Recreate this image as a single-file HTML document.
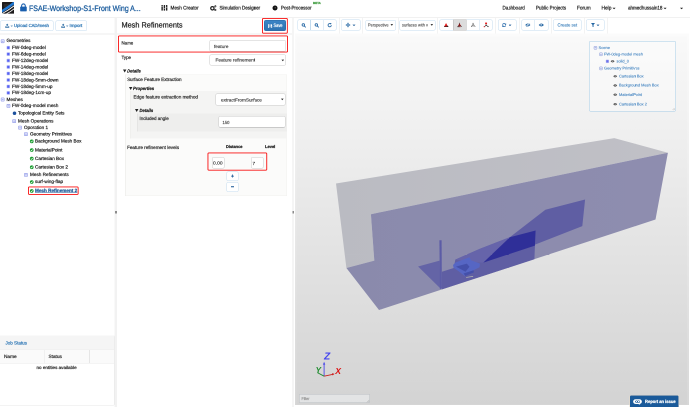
<!DOCTYPE html>
<html><head><meta charset="utf-8"><title>SimScale Mesh Refinements</title>
<style>
html,body{margin:0;padding:0;background:#fff;}
body{width:690px;height:407px;overflow:hidden;font-family:"Liberation Sans",sans-serif;}
#outer{position:absolute;left:0;top:0;width:1380px;height:814px;transform:scale(0.5);transform-origin:0 0;will-change:transform;overflow:hidden;background:#fff;}
#root{position:absolute;left:0;top:0;width:690px;height:407px;overflow:hidden;background:#fff;zoom:2;}
#root div, #root svg, #root span{position:absolute;box-sizing:border-box;}
.t{text-rendering:geometricPrecision;-webkit-text-stroke:0.17px currentColor;white-space:nowrap;line-height:1;transform-origin:0 50%;font-family:"Liberation Sans",sans-serif;}
.btn{border:0.6px solid #c3dbee;border-radius:1.6px;background:#fff;}
.inp{border:0.6px solid #c9c9c9;border-radius:1.6px;background:#fff;}
.red{border:0.75px solid #f21a1a;border-radius:0.6px;}
.sep{width:0.5px;background:#e6e6e6;top:17.8px;height:15.6px;}

</style></head>
<body>
<div id="outer"><div id="root">
<!-- ================= NAVBAR ================= -->
<div style="left:0;top:0;width:690px;height:17.6px;background:#fff;border-bottom:0.7px solid #e2e2e2"></div>
<svg style="left:2px;top:2px" width="12.2" height="11.8" viewBox="0 0 100 100" preserveAspectRatio="none">
  <defs><clipPath id="lgc"><rect x="0" y="0" width="100" height="100" rx="5"/></clipPath></defs>
  <g clip-path="url(#lgc)">
  <rect x="0" y="0" width="100" height="100" fill="#1d1b1c"/>
  <rect x="17" y="17" width="40" height="30" fill="#2b292a"/>
  <path d="M-4 80 Q 48 50 104 3" stroke="#1f78d4" stroke-width="21" fill="none"/>
  <path d="M-4 101 Q 54 70 104 29" stroke="#fff" stroke-width="7" fill="none"/>
  <path d="M20 108 Q 66 88 104 53" stroke="#fff" stroke-width="6" fill="none"/>
  </g>
</svg>
<svg style="left:20px;top:3px" width="6.9" height="8.6" viewBox="0 0 22 27">
  <path d="M5.2 13 V8.6 a5.8 5.8 0 0 1 11.6 0 V13" fill="none" stroke="#1a5fae" stroke-width="3.4"/>
  <rect x="0.5" y="11.4" width="21" height="15.2" rx="2" fill="#1a5fae"/>
</svg>
<!-- mesh creator icon -->
<svg style="left:161px;top:5.2px" width="6.8" height="5.6" viewBox="0 0 19 16">
  <g fill="#222"><rect x="1" y="0" width="4" height="16" rx="1"/><rect x="7.5" y="0" width="4" height="16" rx="1"/><rect x="14" y="0" width="4" height="16" rx="1"/></g>
  <g fill="#fff"><rect x="1" y="4" width="4" height="1.3"/><rect x="7.5" y="9" width="4" height="1.3"/><rect x="14" y="5.5" width="4" height="1.3"/></g>
</svg>
<!-- simulation designer icon (cogs) -->
<svg style="left:210.2px;top:4.8px" width="6.6" height="6.2" viewBox="0 0 18 17">
  <circle cx="6.5" cy="9" r="4.6" fill="none" stroke="#222" stroke-width="3.4"/>
  <circle cx="14.6" cy="3.6" r="1.9" fill="none" stroke="#222" stroke-width="1.8"/>
  <circle cx="14.6" cy="13.6" r="1.9" fill="none" stroke="#222" stroke-width="1.8"/>
</svg>
<!-- post-processor icon -->
<div style="left:272.6px;top:5.3px;width:5px;height:5px;border-radius:50%;background:#111"></div>
<div style="left:274.3px;top:7px;width:1.6px;height:1.6px;border-radius:50%;background:#555"></div>
<!-- carets -->
<svg style="left:612.4px;top:7.5px" width="3.2" height="2" viewBox="0 0 8 4"><path d="M0 0H8L4 4Z" fill="#222"/></svg>
<svg style="left:663.4px;top:7.5px" width="3.2" height="2" viewBox="0 0 8 4"><path d="M0 0H8L4 4Z" fill="#222"/></svg>
<svg style="left:680.0px;top:7.5px" width="3.2" height="2" viewBox="0 0 8 4"><path d="M0 0H8L4 4Z" fill="#222"/></svg>

<!-- ================= PANEL SEPARATORS ================= -->
<div style="left:114.4px;top:17.8px;width:2.6px;height:389.2px;background:#f2f2f2"></div>
<div style="left:292px;top:17.8px;width:1.9px;height:389.2px;background:#f5f5f5"></div>
<div style="left:114.9px;top:210.9px;width:1.9px;height:2.7px;background:#8c8c8c"></div>
<div style="left:292.6px;top:211px;width:1.5px;height:2.6px;background:#8c8c8c"></div>
<!-- line under toolbars -->
<div style="left:0;top:33.7px;width:114.4px;height:0.6px;background:#ececec"></div>
<div style="left:117px;top:33.7px;width:175px;height:0.6px;background:#ececec"></div>

<!-- ================= LEFT TOOLBAR ================= -->
<div class="btn" style="left:0.2px;top:20.5px;width:53.4px;height:10.5px"></div>
<div class="btn" style="left:55.3px;top:20.5px;width:31.7px;height:10.5px"></div>
<svg style="left:5.2px;top:23.7px" width="4.4" height="4.4" viewBox="0 0 12 12"><path d="M6 0.5 L9.5 4.5 H7.3 V7.5 H4.7 V4.5 H2.5 Z M0.5 8 H3.6 L4.4 9.2 H7.6 L8.4 8 H11.5 V11.5 H0.5 Z" fill="#2e6da4"/></svg>
<svg style="left:10.6px;top:25.3px" width="2.4" height="1.4" viewBox="0 0 8 4"><path d="M0 0H8L4 4Z" fill="#2e6da4"/></svg>
<svg style="left:60.8px;top:23.7px" width="4.4" height="4.4" viewBox="0 0 12 12"><path d="M6 0.5 L9.5 4.5 H7.3 V7.5 H4.7 V4.5 H2.5 Z M0.5 8 H3.6 L4.4 9.2 H7.6 L8.4 8 H11.5 V11.5 H0.5 Z" fill="#2e6da4"/></svg>
<svg style="left:66.2px;top:25.3px" width="2.4" height="1.4" viewBox="0 0 8 4"><path d="M0 0H8L4 4Z" fill="#2e6da4"/></svg>

<!-- ================= TREE ICONS ================= -->
<svg style="left:0;top:0" width="115" height="200" viewBox="0 0 115 200">
  <defs>
    <g><rect x="0" y="0" width="3.1" height="3.2" rx="0.5" fill="#dfe3fb" stroke="#8f97e6" stroke-width="0.55"/><rect x="0.8" y="1.35" width="1.5" height="0.5" fill="#7f88dd"/></g>
    <g><rect x="0" y="0" width="2.8" height="3" rx="0.4" fill="#5560f2" stroke="#b9bff7" stroke-width="0.6"/></g>
    <g><circle cx="1.85" cy="1.85" r="1.85" fill="#169a2c"/><path d="M0.9 1.9 L1.6 2.6 L2.8 1.2" fill="none" stroke="#fff" stroke-width="0.6"/></g>
  </defs>
  <g transform="translate(1.1,39.6)"><rect x="0" y="0" width="3.1" height="3.2" rx="0.5" fill="#dfe3fb" stroke="#8f97e6" stroke-width="0.55"/><rect x="0.8" y="1.35" width="1.5" height="0.5" fill="#7f88dd"/></g>
  <g transform="translate(6.9,46.2)"><rect x="0" y="0" width="2.8" height="3" rx="0.4" fill="#5560f2" stroke="#b9bff7" stroke-width="0.6"/></g>
  <g transform="translate(6.9,52.6)"><rect x="0" y="0" width="2.8" height="3" rx="0.4" fill="#5560f2" stroke="#b9bff7" stroke-width="0.6"/></g>
  <g transform="translate(6.9,59.1)"><rect x="0" y="0" width="2.8" height="3" rx="0.4" fill="#5560f2" stroke="#b9bff7" stroke-width="0.6"/></g>
  <g transform="translate(6.9,65.5)"><rect x="0" y="0" width="2.8" height="3" rx="0.4" fill="#5560f2" stroke="#b9bff7" stroke-width="0.6"/></g>
  <g transform="translate(6.9,72)"><rect x="0" y="0" width="2.8" height="3" rx="0.4" fill="#5560f2" stroke="#b9bff7" stroke-width="0.6"/></g>
  <g transform="translate(6.9,78.5)"><rect x="0" y="0" width="2.8" height="3" rx="0.4" fill="#5560f2" stroke="#b9bff7" stroke-width="0.6"/></g>
  <g transform="translate(6.9,85)"><rect x="0" y="0" width="2.8" height="3" rx="0.4" fill="#5560f2" stroke="#b9bff7" stroke-width="0.6"/></g>
  <g transform="translate(6.9,91.4)"><rect x="0" y="0" width="2.8" height="3" rx="0.4" fill="#5560f2" stroke="#b9bff7" stroke-width="0.6"/></g>
  <g transform="translate(1.1,97.9)"><rect x="0" y="0" width="3.1" height="3.2" rx="0.5" fill="#dfe3fb" stroke="#8f97e6" stroke-width="0.55"/><rect x="0.8" y="1.35" width="1.5" height="0.5" fill="#7f88dd"/></g>
  <g transform="translate(6.9,104.3)"><rect x="0" y="0" width="3.1" height="3.2" rx="0.5" fill="#dfe3fb" stroke="#8f97e6" stroke-width="0.55"/><rect x="0.8" y="1.35" width="1.5" height="0.5" fill="#7f88dd"/></g>
  <circle cx="14.5" cy="113.3" r="1.75" fill="#1b4f9c"/>
  <g transform="translate(12.6,119.5)"><rect x="0" y="0" width="3.1" height="3.2" rx="0.5" fill="#dfe3fb" stroke="#8f97e6" stroke-width="0.55"/><rect x="0.8" y="1.35" width="1.5" height="0.5" fill="#7f88dd"/></g>
  <g transform="translate(18.5,126)"><rect x="0" y="0" width="3.1" height="3.2" rx="0.5" fill="#dfe3fb" stroke="#8f97e6" stroke-width="0.55"/><rect x="0.8" y="1.35" width="1.5" height="0.5" fill="#7f88dd"/></g>
  <g transform="translate(24.4,132.5)"><rect x="0" y="0" width="3.1" height="3.2" rx="0.5" fill="#dfe3fb" stroke="#8f97e6" stroke-width="0.55"/><rect x="0.8" y="1.35" width="1.5" height="0.5" fill="#7f88dd"/></g>
  <g transform="translate(29.9,139.5)"><circle cx="1.85" cy="1.85" r="1.85" fill="#169a2c"/><path d="M0.9 1.9 L1.6 2.6 L2.8 1.2" fill="none" stroke="#fff" stroke-width="0.6"/></g>
  <g transform="translate(29.9,148.2)"><circle cx="1.85" cy="1.85" r="1.85" fill="#169a2c"/><path d="M0.9 1.9 L1.6 2.6 L2.8 1.2" fill="none" stroke="#fff" stroke-width="0.6"/></g>
  <g transform="translate(29.9,156.8)"><circle cx="1.85" cy="1.85" r="1.85" fill="#169a2c"/><path d="M0.9 1.9 L1.6 2.6 L2.8 1.2" fill="none" stroke="#fff" stroke-width="0.6"/></g>
  <g transform="translate(29.9,165.4)"><circle cx="1.85" cy="1.85" r="1.85" fill="#169a2c"/><path d="M0.9 1.9 L1.6 2.6 L2.8 1.2" fill="none" stroke="#fff" stroke-width="0.6"/></g>
  <g transform="translate(24.4,173.3)"><rect x="0" y="0" width="3.1" height="3.2" rx="0.5" fill="#dfe3fb" stroke="#8f97e6" stroke-width="0.55"/><rect x="0.8" y="1.35" width="1.5" height="0.5" fill="#7f88dd"/></g>
  <g transform="translate(29.9,180.2)"><circle cx="1.85" cy="1.85" r="1.85" fill="#169a2c"/><path d="M0.9 1.9 L1.6 2.6 L2.8 1.2" fill="none" stroke="#fff" stroke-width="0.6"/></g>
  <g transform="translate(29.9,189.1)"><circle cx="1.85" cy="1.85" r="1.85" fill="#169a2c"/><path d="M0.9 1.9 L1.6 2.6 L2.8 1.2" fill="none" stroke="#fff" stroke-width="0.6"/></g>
</svg>
<svg style="left:27.20px;top:185.60px" width="52.60" height="10.40" viewBox="27.20 185.60 52.60 10.40"><rect x="28.65" y="187.05" width="49.70" height="7.50" rx="0.9" fill="none" stroke="#f81212" stroke-width="0.9"/></svg>

<!-- ================= JOB STATUS ================= -->
<div style="left:0;top:335.4px;width:114.4px;height:70.2px;background:#fff;border:0.6px solid #e6e6e6;border-left:none;border-radius:0 1.2px 1.2px 0"></div>
<div style="left:0;top:335.6px;width:114.2px;height:13.8px;background:#f5f5f5;border-bottom:0.6px solid #e2e2e2"></div>
<div style="left:0;top:349.8px;width:114.2px;height:13.7px;background:#fafafa;border-bottom:0.6px solid #e8e8e8"></div>
<div style="left:44.3px;top:349.8px;width:0.6px;height:13.7px;background:#e6e6e6"></div>
<div style="left:89.2px;top:349.8px;width:0.6px;height:13.7px;background:#e6e6e6"></div>

<!-- ================= MIDDLE PANEL ================= -->
<svg style="left:261.00px;top:16.80px" width="27.80" height="17.60" viewBox="261.00 16.80 27.80 17.60"><rect x="262.45" y="18.25" width="24.90" height="14.70" rx="0.9" fill="none" stroke="#f81212" stroke-width="0.9"/></svg>
<div style="left:264px;top:19.9px;width:22.2px;height:10.9px;background:linear-gradient(#3a84c6,#2e72b1);border:0.6px solid #2a67a0;border-radius:1.6px"></div>
<svg style="left:268.1px;top:23.9px" width="4.3" height="4.3" viewBox="0 0 12 12"><path d="M0.5 0.5 H9.5 L11.5 2.5 V11.5 H0.5 Z" fill="#fff"/><rect x="2.6" y="1.2" width="5.6" height="3.2" fill="#2f6fad"/><rect x="2.6" y="6.8" width="6.8" height="3.8" fill="#2f6fad"/></svg>
<svg style="left:116.90px;top:34.30px" width="172.00" height="19.00" viewBox="116.90 34.30 172.00 19.00"><rect x="118.35" y="35.75" width="169.10" height="16.10" rx="0.9" fill="none" stroke="#f81212" stroke-width="0.9"/></svg>
<div class="inp" style="left:209.4px;top:40px;width:76.7px;height:11.4px"></div>
<div class="inp" style="left:209.4px;top:54.5px;width:76.7px;height:11.1px"></div>
<svg style="left:281.6px;top:59.4px" width="2.6" height="1.9" viewBox="0 0 8 5"><path d="M0 0H8L4 5Z" fill="#222"/></svg>
<svg style="left:123px;top:69.6px" width="3.4" height="3.1" viewBox="0 0 8 7"><path d="M0 0H8L4 7Z" fill="#222"/></svg>
<!-- box1 -->
<div style="left:125.2px;top:74.4px;width:161.6px;height:121.6px;background:#fbfbfa;border:0.5px solid #f0f0ee;border-left:0.8px solid #e6e6e4"></div>
<svg style="left:128.9px;top:86.8px" width="3.4" height="3.1" viewBox="0 0 8 7"><path d="M0 0H8L4 7Z" fill="#222"/></svg>
<!-- box2 -->
<div style="left:130.6px;top:91.2px;width:156.2px;height:47.2px;background:#f4f4f3;border-left:0.8px solid #e2e2e0"></div>
<div class="inp" style="left:215.3px;top:93.7px;width:70.4px;height:11.8px"></div>
<svg style="left:280.9px;top:98.6px" width="2.6" height="1.9" viewBox="0 0 8 5"><path d="M0 0H8L4 5Z" fill="#222"/></svg>
<svg style="left:134.9px;top:108.9px" width="3.4" height="3.1" viewBox="0 0 8 7"><path d="M0 0H8L4 7Z" fill="#222"/></svg>
<!-- box3 -->
<div style="left:137.1px;top:113.5px;width:149.7px;height:18.1px;background:#eeeeed;border-left:0.8px solid #dcdcda"></div>
<div class="inp" style="left:218.3px;top:116.1px;width:67.1px;height:11.3px"></div>
<!-- levels -->
<svg style="left:206.30px;top:151.50px" width="61.70" height="20.10" viewBox="206.30 151.50 61.70 20.10"><rect x="207.75" y="152.95" width="58.80" height="17.20" rx="0.9" fill="none" stroke="#f81212" stroke-width="0.9"/></svg>
<div class="inp" style="left:212px;top:156.8px;width:12.5px;height:11.5px"></div>
<div class="inp" style="left:251.2px;top:156.8px;width:12.4px;height:11.5px"></div>
<div class="btn" style="left:226.7px;top:171.3px;width:11.8px;height:9.6px"></div>
<div class="btn" style="left:226.7px;top:182px;width:11.8px;height:10.2px"></div>
<svg style="left:231px;top:174.3px" width="3.2" height="3.2" viewBox="0 0 8 8"><path d="M3 0H5V3H8V5H5V8H3V5H0V3H3Z" fill="#1f5c99"/></svg>
<svg style="left:231px;top:186.2px" width="3.2" height="1.6" viewBox="0 0 8 4"><path d="M0 0.5H8V3.2H0Z" fill="#1f5c99"/></svg>
<!-- ================= VIEWER TOOLBAR ================= -->
<div class="btn" style="left:297.3px;top:19.6px;width:39px;height:10.8px"></div>
<div style="left:310.2px;top:19.6px;width:0.6px;height:10.8px;background:#c3dbee"></div>
<div style="left:323.3px;top:19.6px;width:0.6px;height:10.8px;background:#c3dbee"></div>
<svg style="left:301.6px;top:22.8px" width="4.4" height="4.6" viewBox="0 0 12 12"><circle cx="5" cy="5" r="3.4" fill="none" stroke="#2466a3" stroke-width="2.2"/><path d="M7.6 7.6 L11 11" stroke="#2466a3" stroke-width="2.4" stroke-linecap="round"/></svg>
<svg style="left:314.7px;top:22.8px" width="4.4" height="4.6" viewBox="0 0 12 12"><circle cx="5" cy="5" r="3.4" fill="none" stroke="#2466a3" stroke-width="2.2"/><path d="M7.6 7.6 L11 11" stroke="#2466a3" stroke-width="2.4" stroke-linecap="round"/></svg>
<svg style="left:327.6px;top:22.9px" width="4.4" height="4.4" viewBox="0 0 12 12"><path d="M10.5 6 A4.5 4.5 0 1 1 6 1.5 H9" fill="none" stroke="#2466a3" stroke-width="2.3"/><path d="M7.5 -0.8 L11.4 2 L7.5 4.6 Z" fill="#2466a3"/></svg>
<div class="sep" style="left:338.8px"></div>
<div class="btn" style="left:341.1px;top:19.4px;width:19.5px;height:11px"></div>
<svg style="left:345.6px;top:22.5px" width="5" height="5" viewBox="0 0 12 12"><path d="M6 0 L8.3 2.8 H7 V5 H9.2 V3.7 L12 6 L9.2 8.3 V7 H7 V9.2 H8.3 L6 12 L3.7 9.2 H5 V7 H2.8 V8.3 L0 6 L2.8 3.7 V5 H5 V2.8 H3.7 Z" fill="#2466a3"/></svg>
<svg style="left:352.4px;top:24.3px" width="3" height="1.8" viewBox="0 0 8 4"><path d="M0 0H8L4 4Z" fill="#1f5c99"/></svg>
<div class="sep" style="left:362.7px"></div>
<div class="btn" style="left:365.4px;top:19.8px;width:30.5px;height:10.6px"></div>
<svg style="left:390.6px;top:24.2px" width="2.6" height="1.9" viewBox="0 0 8 5"><path d="M0 0H8L4 5Z" fill="#222"/></svg>
<div class="sep" style="left:397.9px"></div>
<div class="btn" style="left:399.7px;top:19.8px;width:35.9px;height:10.6px"></div>
<svg style="left:430.3px;top:24.2px" width="2.6" height="1.9" viewBox="0 0 8 5"><path d="M0 0H8L4 5Z" fill="#222"/></svg>
<div class="sep" style="left:437.5px"></div>
<!-- render mode group -->
<div class="btn" style="left:439.6px;top:19.6px;width:53.1px;height:10.8px"></div>
<div style="left:452.9px;top:19.6px;width:13.4px;height:10.8px;background:#dcdcdc;border:0.6px solid #b4b4b4"></div>
<div style="left:479.5px;top:19.6px;width:0.6px;height:10.8px;background:#c3dbee"></div>
<svg style="left:443.7px;top:22.6px" width="5.4" height="5.4" viewBox="0 0 14 14"><path d="M6.6 1.2 L11.4 10.4 H1.8 Z" fill="#e81c1c"/><path d="M1.4 10.9 H12.6 M8.4 7.6 L12.6 10.9" stroke="#222" stroke-width="1.5" fill="none"/></svg>
<svg style="left:457px;top:22.6px" width="5.4" height="5.4" viewBox="0 0 14 14"><path d="M6.6 1.6 L11 10.2 H2.2 Z" fill="#e81c1c"/><path d="M6.6 0.6 V6.4 M6.6 6.4 L1.2 11.2 M6.6 6.4 L12.8 10.8 M1.2 11.2 H9" stroke="#222" stroke-width="1.3" fill="none"/></svg>
<svg style="left:470.3px;top:22.6px" width="5.4" height="5.4" viewBox="0 0 14 14"><path d="M6.6 1.2 L11 10.2 H2.2 Z" stroke="#555" stroke-width="1" stroke-dasharray="1.5 0.9" fill="none"/><path d="M6.6 1 V6.4 M6.6 6.4 L1.4 11.2 M6.6 6.4 L12.8 10.6" stroke="#222" stroke-width="1.2" fill="none"/></svg>
<svg style="left:483.5px;top:22.4px" width="5.4" height="5.4" viewBox="0 0 14 14"><path d="M6.6 4 V7 M6.6 7 L2 11.6 M6.6 7 L12.8 11" stroke="#222" stroke-width="1.3" fill="none"/><rect x="4.2" y="0.2" width="5" height="4.2" fill="#e81c1c"/><rect x="0.6" y="9.6" width="2.6" height="2.6" fill="#e81c1c"/><rect x="10.6" y="9.4" width="2.4" height="2.4" fill="#222"/></svg>
<div class="sep" style="left:495.6px"></div>
<div class="btn" style="left:497.8px;top:19.6px;width:18.8px;height:10.8px"></div>
<svg style="left:502.2px;top:23px" width="4.2" height="4.2" viewBox="0 0 12 12"><path d="M1.6 5 A4.5 4.5 0 0 1 9.8 3.4 M10.4 7 A4.5 4.5 0 0 1 2.2 8.6" fill="none" stroke="#2467a8" stroke-width="2.2"/><path d="M11.8 0.6 V5.2 H7.2 Z M0.2 11.4 V6.8 H4.8 Z" fill="#2467a8"/></svg>
<svg style="left:508.4px;top:24.3px" width="3" height="1.8" viewBox="0 0 8 4"><path d="M0 0H8L4 4Z" fill="#1f5c99"/></svg>
<div class="sep" style="left:518.9px"></div>
<div class="btn" style="left:521.3px;top:19.6px;width:27px;height:10.8px"></div>
<div style="left:534.6px;top:19.6px;width:0.6px;height:10.8px;background:#c3dbee"></div>
<svg style="left:525.2px;top:23px" width="5.6" height="4" viewBox="0 0 14 10"><path d="M0.5 5 Q7 -2.5 13.5 5 Q7 12.5 0.5 5 Z" fill="#2466a3"/><circle cx="7" cy="5" r="2" fill="#fff"/><path d="M1.5 9.5 L12.5 0.5" stroke="#fff" stroke-width="1.6"/><path d="M2.4 9.9 L12.6 1.4" stroke="#2466a3" stroke-width="1"/></svg>
<svg style="left:538.7px;top:23px" width="5.6" height="4" viewBox="0 0 14 10"><path d="M0.5 5 Q7 -2.5 13.5 5 Q7 12.5 0.5 5 Z" fill="#2466a3"/><circle cx="7" cy="4.6" r="2.1" fill="#fff"/><circle cx="7" cy="4.8" r="1.1" fill="#2466a3"/></svg>
<div class="sep" style="left:550.8px"></div>
<div class="btn" style="left:553.1px;top:19.6px;width:28.6px;height:10.8px"></div>
<div class="sep" style="left:583.8px"></div>
<div class="btn" style="left:586.2px;top:19.6px;width:18.3px;height:10.8px"></div>
<svg style="left:590.8px;top:22.8px" width="4" height="4.4" viewBox="0 0 10 11"><path d="M0 0 H10 L6.3 4.6 V11 L3.7 9 V4.6 Z" fill="#2466a3"/></svg>
<svg style="left:596.4px;top:24.3px" width="3" height="1.8" viewBox="0 0 8 4"><path d="M0 0H8L4 4Z" fill="#1f5c99"/></svg>
<div class="sep" style="left:606.9px"></div>


<!-- ================= CANVAS ================= -->
<div style="left:294.9px;top:33.5px;width:394.3px;height:371.7px;background:linear-gradient(#fbfbfb,#d7d7d7);"></div>
<div style="left:296.6px;top:36.4px;width:390.6px;height:368.3px;background:linear-gradient(#f9f9f9,#d3d3d3);"></div>
<svg style="left:0;top:0" width="690" height="407" viewBox="0 0 690 407">
  <defs>
    <linearGradient id="gTop" x1="0" y1="0" x2="1" y2="0"><stop offset="0" stop-color="#babbc2"/><stop offset="1" stop-color="#c0c0c6"/></linearGradient>
    <linearGradient id="gFront" x1="0" y1="0" x2="1" y2="0"><stop offset="0" stop-color="#8a8aac"/><stop offset="1" stop-color="#8e8daf"/></linearGradient>
  </defs>
  <!-- gray: top + back faces -->
  <polygon points="336,183.5 614.3,138.1 667.9,152.7 370.9,214.2 374.3,260.6 346.4,268" fill="url(#gTop)"/>
  <!-- purple: front face + floor -->
  <polygon points="370.9,214.2 667.9,152.7 655.5,219.5 379,310 346.4,268 374.3,260.6" fill="url(#gFront)"/>
  <!-- medium region (Cartesian boxes) -->
  <polygon points="545.4,209.8 585.1,199.5 582.3,226.1 535,244.6 534.4,259.2 441.9,289.4 441.9,271.7 453.7,268 455.3,259.6 480,248.7 509.8,237.2" fill="#5f5ea3"/>
  <!-- slightly lighter band left of dark panel -->
  <polygon points="455.3,259.6 480,248.7 509.8,237.2 483.3,262.6 470,262" fill="#6664aa"/>
  <!-- floor patch left of post -->
  <polygon points="418.1,266.5 439.6,260.6 440.6,288.6" fill="#6464a6"/>
  <!-- dark blue panel -->
  <polygon points="535.6,230.5 534.9,245.6 483.3,262.6 509.8,237.3" fill="#2f2f98"/>
  <!-- post -->
  <polygon points="439.4,240.2 441.6,240.2 441.9,288.4 439.9,289.1" fill="#5c5ca6"/>
  <!-- wing -->
  <polygon points="453,265 455.5,262.5 469.5,257.3 471,260.2 480,263.6 479.5,267.3 473,270.5 464.5,275.9 459,271.5 453.6,267.7" fill="#5666c4"/>
  <polygon points="456,266.6 466.8,263.6 469.5,266.8 465.5,271.8" fill="#4450aa"/>
  <polygon points="463.5,273.5 473.5,270.3 474,272.3 465.5,276" fill="#4450aa"/>
  <polygon points="466,277.1 473,276 473.2,276.7 466.2,277.8" fill="#b9b9ae"/>
</svg>

<!-- scene tree panel -->
<div style="left:589.2px;top:40.8px;width:86.6px;height:70.5px;background:rgba(255,255,255,0.35);border:0.6px solid #a3cbe6;border-radius:1.5px"></div>
<svg style="left:0;top:0" width="690" height="120" viewBox="0 0 690 120">
  <defs>
    <g><rect x="0" y="0" width="2.9" height="3" rx="0.5" fill="#e4e8fb" stroke="#8f9fd6" stroke-width="0.5"/><rect x="0.75" y="1.25" width="1.4" height="0.5" fill="#7f88cc"/></g>
    <g><path d="M0 1.3 Q2 -1.1 4 1.3 Q2 3.7 0 1.3 Z" fill="#555"/><circle cx="2" cy="1.3" r="0.55" fill="#bbb"/></g>
  </defs>
  <g transform="translate(594,46.3)"><rect x="0" y="0" width="2.9" height="3" rx="0.5" fill="#e4e8fb" stroke="#8f9fd6" stroke-width="0.5"/><rect x="0.75" y="1.25" width="1.4" height="0.5" fill="#7f88cc"/></g>
  <g transform="translate(599.5,52.8)"><rect x="0" y="0" width="2.9" height="3" rx="0.5" fill="#e4e8fb" stroke="#8f9fd6" stroke-width="0.5"/><rect x="0.75" y="1.25" width="1.4" height="0.5" fill="#7f88cc"/></g>
  <rect x="606" y="59.9" width="2.8" height="2.9" rx="0.4" fill="#6a70e8" stroke="#c2c6f5" stroke-width="0.5"/>
  <g transform="translate(610.6,60)"><path d="M0 1.3 Q2 -1.1 4 1.3 Q2 3.7 0 1.3 Z" fill="#555"/><circle cx="2" cy="1.3" r="0.55" fill="#bbb"/></g>
  <g transform="translate(599.5,66.9)"><rect x="0" y="0" width="2.9" height="3" rx="0.5" fill="#e4e8fb" stroke="#8f9fd6" stroke-width="0.5"/><rect x="0.75" y="1.25" width="1.4" height="0.5" fill="#7f88cc"/></g>
  <g transform="translate(613.2,75)"><path d="M0 1.3 Q2 -1.1 4 1.3 Q2 3.7 0 1.3 Z" fill="#555"/><circle cx="2" cy="1.3" r="0.55" fill="#bbb"/></g>
  <g transform="translate(613.2,84.2)"><path d="M0 1.3 Q2 -1.1 4 1.3 Q2 3.7 0 1.3 Z" fill="#555"/><circle cx="2" cy="1.3" r="0.55" fill="#bbb"/></g>
  <g transform="translate(613.2,93.4)"><path d="M0 1.3 Q2 -1.1 4 1.3 Q2 3.7 0 1.3 Z" fill="#555"/><circle cx="2" cy="1.3" r="0.55" fill="#bbb"/></g>
  <g transform="translate(613.2,102.9)"><path d="M0 1.3 Q2 -1.1 4 1.3 Q2 3.7 0 1.3 Z" fill="#555"/><circle cx="2" cy="1.3" r="0.55" fill="#bbb"/></g>
  <path d="M672.6 110 L674.6 108 M673.8 110.2 L674.8 109.2" stroke="#9a9a9a" stroke-width="0.4"/>
</svg>

<!-- axes -->
<svg style="left:300px;top:345px" width="60" height="45" viewBox="300 345 60 45">
  <path d="M324.1 376.2 L324.1 363" stroke="#4a4ae8" stroke-width="0.9"/>
  <path d="M322.9 364.6 L324.1 361.8 L325.3 364.6 Z" fill="#4a4ae8"/>
  <path d="M324.1 376.2 L333 374.3" stroke="#c81e1e" stroke-width="0.9"/>
  <path d="M332 373.1 L334.6 373.9 L332.5 375.5 Z" fill="#c81e1e"/>
  <path d="M324.1 376.2 L317.4 372.6" stroke="#1e8c2e" stroke-width="0.9"/>
  <text x="324" y="359.6" font-family="Liberation Sans, sans-serif" font-style="italic" font-weight="bold" font-size="10.2" fill="#4646ee">Z</text>
  <text x="335.2" y="374" font-family="Liberation Sans, sans-serif" font-style="italic" font-weight="bold" font-size="8.6" fill="#dc1414">X</text>
  <text x="315.6" y="373.2" font-family="Liberation Sans, sans-serif" font-style="italic" font-weight="bold" font-size="8.6" fill="#1e8c2e" textLength="5.4" lengthAdjust="spacingAndGlyphs">Y</text>
</svg>

<!-- filter input -->
<div style="left:299.1px;top:394px;width:71.1px;height:9px;background:rgba(250,253,255,0.4);border:0.6px solid #b8bcc0;border-radius:1px"></div>
<svg style="left:366.6px;top:399.6px" width="3" height="3" viewBox="0 0 3 3"><path d="M0.4 2.8 L2.8 0.4 M1.6 2.8 L2.8 1.6" stroke="#9a9a9a" stroke-width="0.4"/></svg>

<!-- report an issue -->
<div style="left:629.6px;top:395.2px;width:49.6px;height:13px;background:#1a5a9a;border:0.7px solid #e9dccb;border-bottom:none;border-radius:1.6px 1.6px 0 0"></div>
<svg style="left:633px;top:399px" width="9" height="6" viewBox="0 0 18 12"><path d="M5 0.5 H13 A4.6 4.6 0 0 1 13 10 L14.4 12 L10.6 10 H5 A4.6 4.6 0 0 1 5 0.5 Z" fill="#fff"/><circle cx="6.6" cy="5.2" r="2" fill="none" stroke="#1a5a9a" stroke-width="1.1"/><circle cx="11.2" cy="5.2" r="2" fill="none" stroke="#1a5a9a" stroke-width="1.1"/></svg>

<span class="t" id="t0" style="left:29.20px;top:4.90px;font-size:8.0px;color:#1f5f9f;-webkit-text-stroke-width:0.32px;font-weight:normal;font-style:normal;text-decoration:none;transform:scaleX(0.8765)">FSAE-Workshop-S1-Front Wing A...</span>
<span class="t" id="t1" style="left:170.40px;top:5.92px;font-size:5.2px;color:#222;-webkit-text-stroke-width:0.22px;font-weight:normal;font-style:normal;text-decoration:none;transform:scaleX(0.8959)">Mesh Creator</span>
<span class="t" id="t2" style="left:219.70px;top:5.92px;font-size:5.2px;color:#222;-webkit-text-stroke-width:0.22px;font-weight:normal;font-style:normal;text-decoration:none;transform:scaleX(0.8754)">Simulation Designer</span>
<span class="t" id="t3" style="left:280.80px;top:5.92px;font-size:5.2px;color:#222;-webkit-text-stroke-width:0.22px;font-weight:normal;font-style:normal;text-decoration:none;transform:scaleX(0.8616)">Post-Processor</span>
<span class="t" id="t4" style="left:313.00px;top:2.00px;font-size:3.0px;color:#3c9a3c;-webkit-text-stroke-width:0.23px;font-weight:bold;font-style:normal;text-decoration:none;transform:scaleX(0.9817)">BETA</span>
<span class="t" id="t5" style="left:502.60px;top:6.02px;font-size:5.2px;color:#222;-webkit-text-stroke-width:0.22px;font-weight:normal;font-style:normal;text-decoration:none;transform:scaleX(0.8772)">Dashboard</span>
<span class="t" id="t6" style="left:536.00px;top:6.02px;font-size:5.2px;color:#222;-webkit-text-stroke-width:0.22px;font-weight:normal;font-style:normal;text-decoration:none;transform:scaleX(0.8758)">Public Projects</span>
<span class="t" id="t7" style="left:577.00px;top:6.02px;font-size:5.2px;color:#222;-webkit-text-stroke-width:0.22px;font-weight:normal;font-style:normal;text-decoration:none;transform:scaleX(0.9124)">Forum</span>
<span class="t" id="t8" style="left:601.30px;top:6.02px;font-size:5.2px;color:#222;-webkit-text-stroke-width:0.22px;font-weight:normal;font-style:normal;text-decoration:none;transform:scaleX(0.9263)">Help</span>
<span class="t" id="t9" style="left:627.90px;top:6.02px;font-size:5.2px;color:#222;-webkit-text-stroke-width:0.22px;font-weight:normal;font-style:normal;text-decoration:none;transform:scaleX(0.8692)">ahmedhussain18</span>
<span class="t" id="t10" style="left:14.00px;top:23.64px;font-size:4.4px;color:#337ab7;-webkit-text-stroke-width:0.23px;font-weight:normal;font-style:normal;text-decoration:none;transform:scaleX(0.9608)">Upload CAD/mesh</span>
<span class="t" id="t11" style="left:69.60px;top:23.64px;font-size:4.4px;color:#337ab7;-webkit-text-stroke-width:0.23px;font-weight:normal;font-style:normal;text-decoration:none;transform:scaleX(1.0266)">Import</span>
<span class="t" id="t12" style="left:6.60px;top:38.53px;font-size:4.67px;color:#111;-webkit-text-stroke-width:0.17px;font-weight:normal;font-style:normal;text-decoration:none;transform:scaleX(0.9913)">Geometries</span>
<span class="t" id="t13" style="left:12.20px;top:45.73px;font-size:4.67px;color:#111;-webkit-text-stroke-width:0.17px;font-weight:normal;font-style:normal;text-decoration:none;transform:scaleX(1.0132)">FW-0deg-model</span>
<span class="t" id="t14" style="left:12.20px;top:52.03px;font-size:4.67px;color:#111;-webkit-text-stroke-width:0.17px;font-weight:normal;font-style:normal;text-decoration:none;transform:scaleX(1.0132)">FW-6deg-model</span>
<span class="t" id="t15" style="left:12.20px;top:58.63px;font-size:4.67px;color:#111;-webkit-text-stroke-width:0.17px;font-weight:normal;font-style:normal;text-decoration:none;transform:scaleX(1.0069)">FW-12deg-model</span>
<span class="t" id="t16" style="left:12.20px;top:65.03px;font-size:4.67px;color:#111;-webkit-text-stroke-width:0.17px;font-weight:normal;font-style:normal;text-decoration:none;transform:scaleX(1.0069)">FW-14deg-model</span>
<span class="t" id="t17" style="left:12.20px;top:71.53px;font-size:4.67px;color:#111;-webkit-text-stroke-width:0.17px;font-weight:normal;font-style:normal;text-decoration:none;transform:scaleX(1.0069)">FW-18deg-model</span>
<span class="t" id="t18" style="left:12.20px;top:78.13px;font-size:4.67px;color:#111;-webkit-text-stroke-width:0.17px;font-weight:normal;font-style:normal;text-decoration:none;transform:scaleX(1.0040)">FW-18deg-5mm-down</span>
<span class="t" id="t19" style="left:12.20px;top:84.53px;font-size:4.67px;color:#111;-webkit-text-stroke-width:0.17px;font-weight:normal;font-style:normal;text-decoration:none;transform:scaleX(1.0037)">FW-18deg-5mm-up</span>
<span class="t" id="t20" style="left:12.20px;top:90.53px;font-size:4.67px;color:#111;-webkit-text-stroke-width:0.17px;font-weight:normal;font-style:normal;text-decoration:none;transform:scaleX(1.0052)">FW-18deg-1cm-up</span>
<span class="t" id="t21" style="left:6.60px;top:97.53px;font-size:4.67px;color:#111;-webkit-text-stroke-width:0.17px;font-weight:normal;font-style:normal;text-decoration:none;transform:scaleX(0.9978)">Meshes</span>
<span class="t" id="t22" style="left:12.20px;top:103.43px;font-size:4.67px;color:#111;-webkit-text-stroke-width:0.17px;font-weight:normal;font-style:normal;text-decoration:none;transform:scaleX(1.0075)">FW-0deg-model mesh</span>
<span class="t" id="t23" style="left:18.00px;top:110.93px;font-size:4.67px;color:#111;-webkit-text-stroke-width:0.17px;font-weight:normal;font-style:normal;text-decoration:none;transform:scaleX(0.9908)">Topological Entity Sets</span>
<span class="t" id="t24" style="left:18.00px;top:119.13px;font-size:4.67px;color:#111;-webkit-text-stroke-width:0.17px;font-weight:normal;font-style:normal;text-decoration:none;transform:scaleX(0.9965)">Mesh Operations</span>
<span class="t" id="t25" style="left:23.90px;top:125.63px;font-size:4.67px;color:#111;-webkit-text-stroke-width:0.17px;font-weight:normal;font-style:normal;text-decoration:none;transform:scaleX(0.9846)">Operation 1</span>
<span class="t" id="t26" style="left:29.80px;top:132.13px;font-size:4.67px;color:#111;-webkit-text-stroke-width:0.17px;font-weight:normal;font-style:normal;text-decoration:none;transform:scaleX(1.0004)">Geometry Primitives</span>
<span class="t" id="t27" style="left:35.10px;top:138.93px;font-size:4.67px;color:#111;-webkit-text-stroke-width:0.17px;font-weight:normal;font-style:normal;text-decoration:none;transform:scaleX(0.9908)">Background Mesh Box</span>
<span class="t" id="t28" style="left:35.10px;top:148.13px;font-size:4.67px;color:#111;-webkit-text-stroke-width:0.17px;font-weight:normal;font-style:normal;text-decoration:none;transform:scaleX(1.0064)">MaterialPoint</span>
<span class="t" id="t29" style="left:35.10px;top:156.73px;font-size:4.67px;color:#111;-webkit-text-stroke-width:0.17px;font-weight:normal;font-style:normal;text-decoration:none;transform:scaleX(0.9899)">Cartesian Box</span>
<span class="t" id="t30" style="left:35.10px;top:164.83px;font-size:4.67px;color:#111;-webkit-text-stroke-width:0.17px;font-weight:normal;font-style:normal;text-decoration:none;transform:scaleX(0.9944)">Cartesian Box 2</span>
<span class="t" id="t31" style="left:29.80px;top:172.43px;font-size:4.67px;color:#111;-webkit-text-stroke-width:0.17px;font-weight:normal;font-style:normal;text-decoration:none;transform:scaleX(0.9951)">Mesh Refinements</span>
<span class="t" id="t32" style="left:35.10px;top:179.63px;font-size:4.67px;color:#111;-webkit-text-stroke-width:0.17px;font-weight:normal;font-style:normal;text-decoration:none;transform:scaleX(1.0036)">surf-wing-flap</span>
<span class="t" id="t33" style="left:35.10px;top:188.53px;font-size:4.67px;color:#1f5c99;-webkit-text-stroke-width:0.23px;font-weight:bold;font-style:normal;text-decoration:underline;transform:scaleX(0.9928)">Mesh Refinement 2</span>
<span class="t" id="t34" style="left:5.30px;top:340.52px;font-size:4.7px;color:#337ab7;-webkit-text-stroke-width:0.23px;font-weight:normal;font-style:normal;text-decoration:none;transform:scaleX(0.9659)">Job Status</span>
<span class="t" id="t35" style="left:3.80px;top:353.92px;font-size:4.7px;color:#333;-webkit-text-stroke-width:0.23px;font-weight:normal;font-style:normal;text-decoration:none;transform:scaleX(1.0154)">Name</span>
<span class="t" id="t36" style="left:48.70px;top:353.92px;font-size:4.7px;color:#333;-webkit-text-stroke-width:0.23px;font-weight:normal;font-style:normal;text-decoration:none;transform:scaleX(1.0008)">Status</span>
<span class="t" id="t37" style="left:36.30px;top:365.34px;font-size:4.4px;color:#333;-webkit-text-stroke-width:0.23px;font-weight:normal;font-style:normal;text-decoration:none;transform:scaleX(1.0404)">no entities available</span>
<span class="t" id="t38" style="left:121.30px;top:21.26px;font-size:7.6px;color:#2e2e2e;-webkit-text-stroke-width:0.26px;font-weight:normal;font-style:normal;text-decoration:none;transform:scaleX(0.9651)">Mesh Refinements</span>
<span class="t" id="t39" style="left:273.30px;top:23.50px;font-size:5.0px;color:#fff;-webkit-text-stroke-width:0.2px;font-weight:normal;font-style:normal;text-decoration:none;transform:scaleX(0.7896)">Save</span>
<span class="t" id="t40" style="left:121.30px;top:40.32px;font-size:4.7px;color:#333;-webkit-text-stroke-width:0.23px;font-weight:normal;font-style:normal;text-decoration:none;transform:scaleX(0.9354)">Name</span>
<span class="t" id="t41" style="left:213.80px;top:44.64px;font-size:4.4px;color:#444;-webkit-text-stroke-width:0.16px;font-weight:normal;font-style:normal;text-decoration:none;transform:scaleX(1.0515)">feature</span>
<span class="t" id="t42" style="left:121.30px;top:55.02px;font-size:4.7px;color:#333;-webkit-text-stroke-width:0.23px;font-weight:normal;font-style:normal;text-decoration:none;transform:scaleX(0.9347)">Type</span>
<span class="t" id="t43" style="left:215.30px;top:57.76px;font-size:4.6px;color:#444;-webkit-text-stroke-width:0.16px;font-weight:normal;font-style:normal;text-decoration:none;transform:scaleX(1.0177)">Feature refinement</span>
<span class="t" id="t44" style="left:127.20px;top:68.86px;font-size:4.6px;color:#222;-webkit-text-stroke-width:0.23px;font-weight:bold;font-style:italic;text-decoration:none;transform:scaleX(0.9223)">Details</span>
<span class="t" id="t45" style="left:127.20px;top:77.12px;font-size:4.7px;color:#333;-webkit-text-stroke-width:0.23px;font-weight:normal;font-style:normal;text-decoration:none;transform:scaleX(0.9792)">Surface Feature Extraction</span>
<span class="t" id="t46" style="left:133.00px;top:86.56px;font-size:4.6px;color:#222;-webkit-text-stroke-width:0.23px;font-weight:bold;font-style:italic;text-decoration:none;transform:scaleX(0.9284)">Properties</span>
<span class="t" id="t47" style="left:133.40px;top:94.72px;font-size:4.7px;color:#333;-webkit-text-stroke-width:0.23px;font-weight:normal;font-style:normal;text-decoration:none;transform:scaleX(0.9861)">Edge feature extraction method</span>
<span class="t" id="t48" style="left:220.90px;top:98.20px;font-size:4.5px;color:#444;-webkit-text-stroke-width:0.16px;font-weight:normal;font-style:normal;text-decoration:none;transform:scaleX(1.0350)">extractFromSurface</span>
<span class="t" id="t49" style="left:139.30px;top:108.66px;font-size:4.6px;color:#222;-webkit-text-stroke-width:0.23px;font-weight:bold;font-style:italic;text-decoration:none;transform:scaleX(0.9091)">Details</span>
<span class="t" id="t50" style="left:139.60px;top:116.02px;font-size:4.7px;color:#333;-webkit-text-stroke-width:0.23px;font-weight:normal;font-style:normal;text-decoration:none;transform:scaleX(0.9574)">Included angle</span>
<span class="t" id="t51" style="left:222.70px;top:120.64px;font-size:4.4px;color:#444;-webkit-text-stroke-width:0.16px;font-weight:normal;font-style:normal;text-decoration:none;transform:scaleX(0.9396)">150</span>
<span class="t" id="t52" style="left:127.20px;top:145.22px;font-size:4.7px;color:#333;-webkit-text-stroke-width:0.23px;font-weight:normal;font-style:normal;text-decoration:none;transform:scaleX(0.9832)">Feature refinement levels</span>
<span class="t" id="t53" style="left:226.10px;top:145.06px;font-size:4.1px;color:#222;-webkit-text-stroke-width:0.23px;font-weight:bold;font-style:normal;text-decoration:none;transform:scaleX(0.9666)">Distance</span>
<span class="t" id="t54" style="left:265.20px;top:145.06px;font-size:4.1px;color:#222;-webkit-text-stroke-width:0.23px;font-weight:bold;font-style:normal;text-decoration:none;transform:scaleX(0.9839)">Level</span>
<span class="t" id="t55" style="left:213.00px;top:161.24px;font-size:4.4px;color:#444;-webkit-text-stroke-width:0.16px;font-weight:normal;font-style:normal;text-decoration:none;transform:scaleX(1.1212)">0.00</span>
<span class="t" id="t56" style="left:252.50px;top:161.74px;font-size:4.4px;color:#444;-webkit-text-stroke-width:0.16px;font-weight:normal;font-style:normal;text-decoration:none;transform:scaleX(0.9376)">7</span>
<span class="t" id="t57" style="left:368.00px;top:22.90px;font-size:4.5px;color:#444;-webkit-text-stroke-width:0.1px;font-weight:normal;font-style:normal;text-decoration:none;transform:scaleX(0.8760)">Perspective</span>
<span class="t" id="t58" style="left:402.00px;top:22.90px;font-size:4.5px;color:#444;-webkit-text-stroke-width:0.1px;font-weight:normal;font-style:normal;text-decoration:none;transform:scaleX(0.8735)">surfaces with v</span>
<span class="t" id="t59" style="left:557.60px;top:22.90px;font-size:4.5px;color:#337ab7;-webkit-text-stroke-width:0.1px;font-weight:normal;font-style:normal;text-decoration:none;transform:scaleX(0.9487)">Create set</span>
<span class="t" id="t60" style="left:598.30px;top:46.22px;font-size:3.95px;color:#3f80bf;-webkit-text-stroke-width:0.08px;font-weight:normal;font-style:normal;text-decoration:none;transform:scaleX(1.0279)">Scene</span>
<span class="t" id="t61" style="left:604.00px;top:52.72px;font-size:3.95px;color:#3f80bf;-webkit-text-stroke-width:0.08px;font-weight:normal;font-style:normal;text-decoration:none;transform:scaleX(0.9984)">FW-0deg-model mesh</span>
<span class="t" id="t62" style="left:616.30px;top:59.72px;font-size:3.95px;color:#3f80bf;-webkit-text-stroke-width:0.08px;font-weight:normal;font-style:normal;text-decoration:none;transform:scaleX(0.9914)">solid_0</span>
<span class="t" id="t63" style="left:604.00px;top:66.32px;font-size:3.95px;color:#3f80bf;-webkit-text-stroke-width:0.08px;font-weight:normal;font-style:normal;text-decoration:none;transform:scaleX(0.9996)">Geometry Primitives</span>
<span class="t" id="t64" style="left:618.90px;top:74.72px;font-size:3.95px;color:#3f80bf;-webkit-text-stroke-width:0.08px;font-weight:normal;font-style:normal;text-decoration:none;transform:scaleX(0.9927)">Cartesian Box</span>
<span class="t" id="t65" style="left:618.90px;top:83.42px;font-size:3.95px;color:#3f80bf;-webkit-text-stroke-width:0.08px;font-weight:normal;font-style:normal;text-decoration:none;transform:scaleX(1.0001)">Background Mesh Box</span>
<span class="t" id="t66" style="left:618.90px;top:93.12px;font-size:3.95px;color:#3f80bf;-webkit-text-stroke-width:0.08px;font-weight:normal;font-style:normal;text-decoration:none;transform:scaleX(0.9986)">MaterialPoint</span>
<span class="t" id="t67" style="left:618.90px;top:102.62px;font-size:3.95px;color:#3f80bf;-webkit-text-stroke-width:0.08px;font-weight:normal;font-style:normal;text-decoration:none;transform:scaleX(0.9939)">Cartesian Box 2</span>
<span class="t" id="t68" style="left:301.50px;top:397.00px;font-size:4.0px;color:#999;-webkit-text-stroke-width:0.23px;font-weight:normal;font-style:normal;text-decoration:none;transform:scaleX(0.8998)">Filter</span>
<span class="t" id="t69" style="left:645.00px;top:399.46px;font-size:4.6px;color:#fff;-webkit-text-stroke-width:0.23px;font-weight:bold;font-style:normal;text-decoration:none;transform:scaleX(0.8878)">Report an issue</span>
</div></div>
</body></html>
